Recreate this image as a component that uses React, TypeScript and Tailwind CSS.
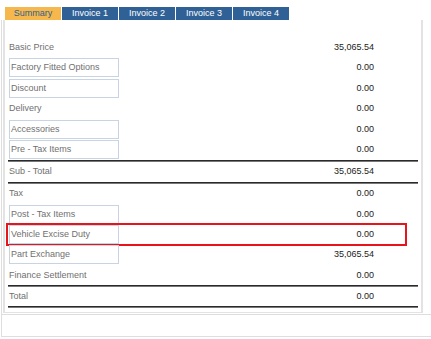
import React from "react";

type Row = { label: string; value: string; boxed?: boolean; marked?: boolean };

const groupOne: Row[] = [
  { label: "Basic Price", value: "35,065.54" },
  { label: "Factory Fitted Options", value: "0.00", boxed: true },
  { label: "Discount", value: "0.00", boxed: true },
  { label: "Delivery", value: "0.00" },
  { label: "Accessories", value: "0.00", boxed: true },
  { label: "Pre - Tax Items", value: "0.00", boxed: true },
];

const groupTwo: Row[] = [
  { label: "Tax", value: "0.00" },
  { label: "Post - Tax Items", value: "0.00", boxed: true },
  { label: "Vehicle Excise Duty", value: "0.00", boxed: true, marked: true },
  { label: "Part Exchange", value: "35,065.54", boxed: true },
  { label: "Finance Settlement", value: "0.00" },
];

const tabs = ["Summary", "Invoice 1", "Invoice 2", "Invoice 3", "Invoice 4"];

const PriceRow = ({ row, height }: { row: Row; height: string }) => (
  <div className={`relative flex items-center justify-between pr-[44px] ${height}`}>
    {row.boxed ? (
      <div className="ml-px w-[110px] h-[19px] border border-[#c8d4e2] flex items-center pl-px text-[#707070]">
        {row.label}
      </div>
    ) : (
      <span className="pl-px text-[#707070]">{row.label}</span>
    )}
    <span className="text-[#222]">{row.value}</span>
    {row.marked && (
      <div className="absolute -left-[2px] right-[11px] -top-px -bottom-px border-2 border-[#e8141b]" />
    )}
  </div>
);

const Rule = () => <div className="h-[2px] bg-[#2a2a2a] border-b border-[#777]" />;

export default function App() {
  return (
    <div className="w-[431px] h-[339px] bg-white overflow-hidden text-[9px] leading-none font-['Liberation_Sans',Arial,sans-serif]">
      <div className="flex gap-px pl-[5px] pt-[7px] h-[20px]">
        {tabs.map((tab, i) => (
          <div
            key={tab}
            className={
              i === 0
                ? "w-[56px] h-[13px] flex items-center justify-center bg-[#f6b84c] text-[#2d5f92]"
                : "w-[56px] h-[13px] flex items-center justify-center bg-[#2f6196] text-white"
            }
          >
            {tab}
          </div>
        ))}
      </div>

      <div className="ml-px border-l border-[#dedede]">
        <div className="ml-px w-[420px] border-x-2 border-b border-[#e3e3e3] pt-[17px] pb-[4px] pl-[3px] pr-[3px]">
          {groupOne.map((row) => (
            <PriceRow key={row.label} row={row} height="h-[20.5px]" />
          ))}
          <Rule />
          <PriceRow row={{ label: "Sub - Total", value: "35,065.54" }} height="h-[19.5px]" />
          <Rule />
          {groupTwo.map((row) => (
            <PriceRow key={row.label} row={row} height="h-[20.4px]" />
          ))}
          <Rule />
          <PriceRow row={{ label: "Total", value: "0.00" }} height="h-[18.5px]" />
          <Rule />
        </div>
        <div className="mt-px h-[23px] border-y border-[#dedede]" />
      </div>
    </div>
  );
}
